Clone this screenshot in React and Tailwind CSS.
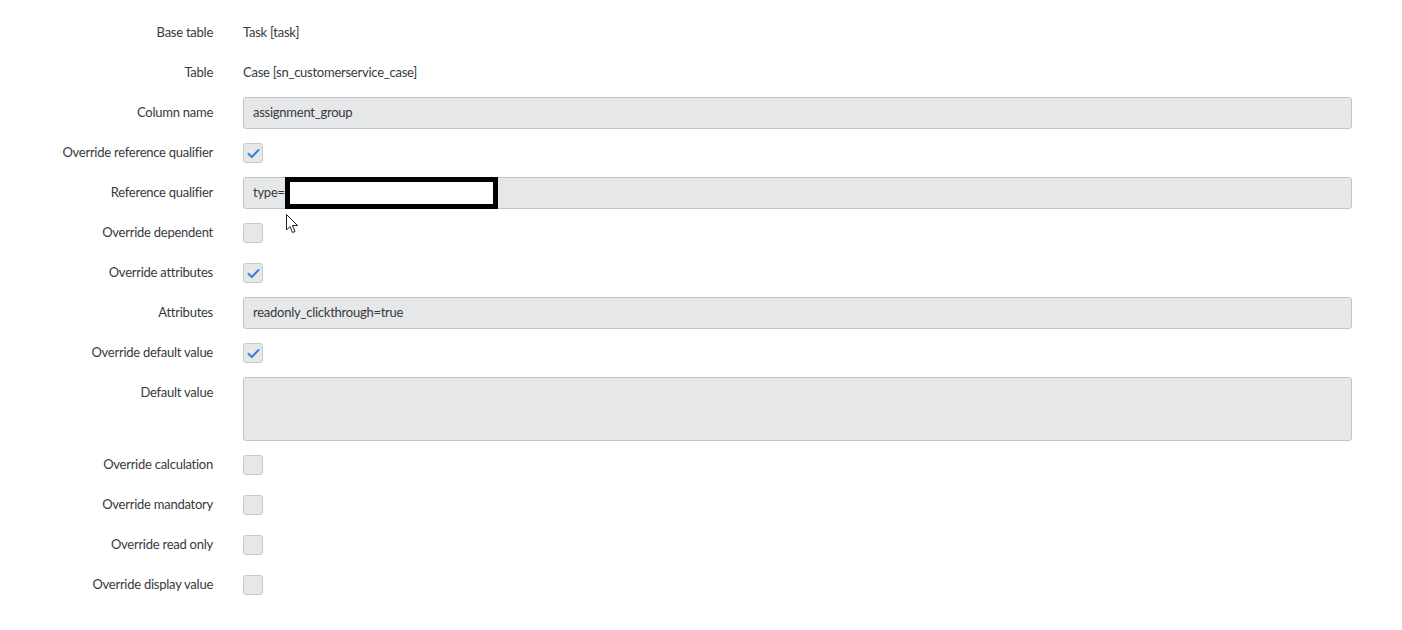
import React from "react";

const font = { fontFamily: '"Source Sans Pro", Lato, "Open Sans", sans-serif' };

function Check({ checked }) {
  return (
    <div className="w-5 h-5 rounded-[3px] border border-[#c8c8c8] bg-[#e6e7e8] flex items-center justify-center">
      {checked && (
        <svg width="13" height="11" viewBox="0 0 13 11">
          <path d="M1.5 5.8 L4.8 9 L11.5 2" fill="none" stroke="#3a80da" strokeWidth="2" strokeLinecap="round" strokeLinejoin="round" />
        </svg>
      )}
    </div>
  );
}

function Row({ label, children }) {
  return (
    <div className="flex items-start gap-[30px]">
      <div className="w-[213px] shrink-0 h-8 flex items-center justify-end text-right">{label}</div>
      <div className="flex-1 min-h-8 flex items-center">{children}</div>
    </div>
  );
}

function Input({ value, children }) {
  return (
    <div className="relative w-full h-8 rounded-[3px] border border-[#c4c4c4] bg-[#e6e7e8] flex items-center px-[9px]">
      {value}
      {children}
    </div>
  );
}

export default function App() {
  return (
    <div className="w-[1402px] h-[630px] bg-white text-[13px] tracking-[-0.25px] text-[#343a40] pt-[17px] pr-[50px]" style={font}>
      <div className="relative flex flex-col gap-2">
        <Row label="Base table"><span>Task [task]</span></Row>
        <Row label="Table"><span>Case [sn_customerservice_case]</span></Row>
        <Row label="Column name"><Input value="assignment_group" /></Row>
        <Row label="Override reference qualifier"><Check checked /></Row>
        <Row label="Reference qualifier">
          <Input value="type=">
            <div className="absolute left-[41px] top-[-1px] w-[213px] h-8 border-[5px] border-black bg-white" />
          </Input>
        </Row>
        <Row label="Override dependent"><Check /></Row>
        <Row label="Override attributes"><Check checked /></Row>
        <Row label="Attributes"><Input value="readonly_clickthrough=true" /></Row>
        <Row label="Override default value"><Check checked /></Row>
        <Row label="Default value">
          <div className="w-full h-16 rounded-[3px] border border-[#c4c4c4] bg-[#e6e7e8]" />
        </Row>
        <Row label="Override calculation"><Check /></Row>
        <Row label="Override mandatory"><Check /></Row>
        <Row label="Override read only"><Check /></Row>
        <Row label="Override display value"><Check /></Row>
        <svg className="absolute left-[286px] top-[197px]" width="13" height="20" viewBox="0 0 13 20">
          <path d="M0.5 0.5 L0.5 16 L4 12.5 L6.5 18.5 L9 17.5 L6.5 11.5 L11.5 11.5 Z" fill="white" stroke="#222" strokeWidth="1" strokeLinejoin="round" />
        </svg>
      </div>
    </div>
  );
}
